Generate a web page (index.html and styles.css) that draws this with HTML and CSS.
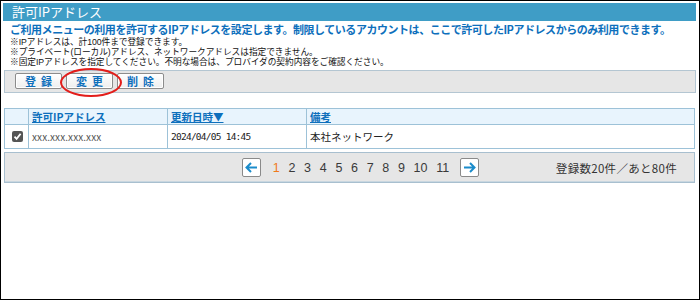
FILE: index.html
```html
<!DOCTYPE html>
<html lang="ja">
<head>
  <meta charset="UTF-8">
  <title>許可IPアドレス</title>
  <link rel="stylesheet" href="styles.css">
</head>
<body>
  <div class="frame">
    <h1 class="title-bar">許可IPアドレス</h1>

    <div class="intro">
      <p class="lead">ご利用メニューの利用を許可するIPアドレスを設定します。制限しているアカウントは、ここで許可したIPアドレスからのみ利用できます。</p>
      <ul class="notes">
        <li>※IPアドレスは、計100件まで登録できます。</li>
        <li>※プライベート(ローカル)アドレス、ネットワークアドレスは指定できません。</li>
        <li>※固定IPアドレスを指定してください。不明な場合は、プロバイダの契約内容をご確認ください。</li>
      </ul>
    </div>

    <!-- 操作ボタン -->
    <div class="toolbar">
      <button class="btn">登録</button>
      <button class="btn">変更</button>
      <button class="btn">削除</button>
      <span class="mark"></span>
    </div>

    <!-- 一覧 -->
    <table class="ip-table">
      <thead>
        <tr>
          <th class="col-check"></th>
          <th class="col-ip"><a href="#">許可IPアドレス</a></th>
          <th class="col-date"><a href="#">更新日時▼</a></th>
          <th><a href="#">備考</a></th>
        </tr>
      </thead>
      <tbody>
        <tr>
          <td class="col-check"><span class="checkbox">
            <svg width="9" height="9" viewBox="0 0 9 9"><path d="M1.5 4.6 L3.6 6.8 L7.6 1.8" fill="none" stroke="#fff" stroke-width="1.8"/></svg>
          </span></td>
          <td class="col-ip ip-text">xxx.xxx.xxx.xxx</td>
          <td class="col-date date-text">2024/04/05 14:45</td>
          <td>本社ネットワーク</td>
        </tr>
      </tbody>
    </table>

    <!-- ページ送り -->
    <div class="pager">
      <div class="pages">
        <a class="arrow" href="#">
          <svg width="13" height="11" viewBox="0 0 13 11"><path d="M12 5.5 H2 M6 1 L1.5 5.5 L6 10" fill="none" stroke="#1b8ccb" stroke-width="2"/></svg>
        </a>
        <span class="page current">1</span>
        <a class="page" href="#">2</a>
        <a class="page" href="#">3</a>
        <a class="page" href="#">4</a>
        <a class="page" href="#">5</a>
        <a class="page" href="#">6</a>
        <a class="page" href="#">7</a>
        <a class="page" href="#">8</a>
        <a class="page" href="#">9</a>
        <a class="page" href="#">10</a>
        <a class="page" href="#">11</a>
        <a class="arrow" href="#">
          <svg width="13" height="11" viewBox="0 0 13 11"><path d="M1 5.5 H11 M7 1 L11.5 5.5 L7 10" fill="none" stroke="#1b8ccb" stroke-width="2"/></svg>
        </a>
      </div>
      <div class="count">登録数20件／あと80件</div>
    </div>
  </div>
</body>
</html>
```

FILE: styles.css
```css
:root {
  --bar: #3f9dc6;
  --blue: #0d6fbc;
  --line: #9dc2d8;
  --gray-bg: #e6e6e6;
  --text: #222;
}

* {
  margin: 0;
  padding: 0;
  box-sizing: border-box;
}

body {
  font-family: "Noto Sans CJK JP", "Liberation Sans", sans-serif;
  color: var(--text);
  background: #fff;
}

.frame {
  position: relative;
  width: 700px;
  height: 300px;
  border: 1px solid #000;
  padding: 2px 2px 0 2px;
}

.title-bar {
  height: 18px;
  background: var(--bar);
  color: #fff;
  font-size: 13px;
  font-weight: normal;
  line-height: 18px;
  padding-left: 9px;
  margin-right: 1px;
}

.intro {
  padding-left: 7px;
}

.lead {
  font-size: 11px;
  font-weight: bold;
  color: var(--blue);
  line-height: 16px;
  letter-spacing: -0.46px;
  white-space: nowrap;
}

.notes {
  list-style: none;
  font-family: "Liberation Sans", "Noto Sans CJK JP", sans-serif;
  font-size: 8.7px;
  line-height: 10px;
  letter-spacing: -0.05px;
  color: #111;
}

.toolbar {
  position: relative;
  display: flex;
  gap: 4px;
  margin: 3px 1px 0 1px;
  height: 23px;
  padding: 2px 10px;
  background: var(--gray-bg);
  border: 1px solid #b4c6d2;
}

.btn {
  width: 47px;
  height: 16px;
  font-family: "Noto Sans CJK JP", sans-serif;
  font-size: 11px;
  font-weight: bold;
  line-height: 14px;
  letter-spacing: 5px;
  padding-left: 5px;
  color: var(--blue);
  background: linear-gradient(#fff, #eee);
  border: 1px solid #8c8c8c;
  border-radius: 2px;
  box-shadow: inset 0 0 0 1px #fff;
}

/* 赤丸の注記 */
.mark {
  position: absolute;
  left: 55px;
  top: -3px;
  width: 62px;
  height: 29px;
  border: 2px solid #e31d1a;
  border-radius: 50%;
}

.ip-table {
  width: 691px;
  margin: 15px 0 0 1px;
  border-collapse: collapse;
  border: 1px solid var(--line);
  font-size: 10.5px;
}

.ip-table th,
.ip-table td {
  border: 1px solid var(--line);
  text-align: left;
  padding: 0 3px;
}

.ip-table th {
  height: 16px;
  background: #e8f4fd;
  line-height: 14px;
}

.ip-table th a {
  color: var(--blue);
  font-weight: bold;
  text-decoration: underline;
}

.ip-table td {
  height: 24px;
}

.col-check {
  width: 24px;
}

.col-ip {
  width: 139px;
}

.col-date {
  width: 139px;
}

.checkbox {
  display: flex;
  align-items: center;
  justify-content: center;
  width: 11px;
  height: 11px;
  margin-left: 4px;
  background: #555;
  border-radius: 2px;
}

.ip-text {
  font-size: 10px;
  color: #555;
  letter-spacing: 0.1px;
}

.date-text {
  font-family: "DejaVu Sans Mono", "Liberation Mono", monospace;
  font-size: 9.5px;
  letter-spacing: -0.75px;
}

.pager {
  display: grid;
  grid-template-columns: 1fr auto 1fr;
  align-items: center;
  width: 691px;
  height: 31px;
  margin: 3px 0 0 1px;
  padding: 0 17px 0 39px;
  background: var(--gray-bg);
  border: 1px solid #a8bfcf;
  box-shadow: inset 0 -1px 0 #c9d7e0;
}

.pages {
  grid-column: 2;
  display: flex;
  align-items: center;
  gap: 8.7px;
  font-family: "Liberation Sans", Arial, sans-serif;
  font-size: 12.5px;
}

.page {
  color: #3a3a3a;
  text-decoration: none;
}

.page.current {
  color: #f07a1a;
}

.arrow {
  display: flex;
  align-items: center;
  justify-content: center;
  width: 19px;
  height: 19px;
  background: #fff;
  border: 1px solid #8a8a8a;
  border-radius: 2px;
}

.arrow:first-child {
  margin-right: 3px;
}

.arrow:last-child {
  margin-left: 2px;
}

.count {
  grid-column: 3;
  justify-self: end;
  font-size: 11.5px;
  letter-spacing: 0.3px;
  color: #333;
}
```
